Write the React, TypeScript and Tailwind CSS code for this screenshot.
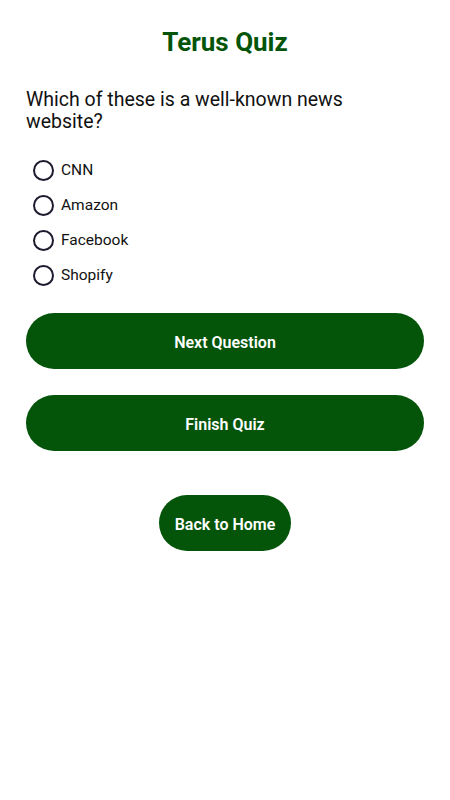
import React from "react";

const options = ["CNN", "Amazon", "Facebook", "Shopify"];

export default function App() {
  return (
    <div className="min-h-[800px] w-full bg-white px-[26px]" style={{ fontFamily: "Roboto, 'Noto Sans', sans-serif" }}>
      <h1 className="pt-[27px] text-center text-[26px] font-bold leading-[30px] text-[#04550a]">Terus Quiz</h1>
      <p className="mt-[32px] text-[19.5px] leading-[22px] text-[#111]">Which of these is a well-known news website?</p>
      <div className="mt-[20px] flex flex-col">
        {options.map((o) => (
          <label key={o} className="flex h-[35px] items-center">
            <span className="ml-[7px] box-border h-[21px] w-[21px] rounded-full border-2 border-[#1c1b2e]" />
            <span className="ml-[7px] text-[15.5px] text-[#111]">{o}</span>
          </label>
        ))}
      </div>
      <div className="mt-[20px] flex flex-col gap-[26px]">
        <button className="h-[56px] w-full rounded-full bg-[#04550a] pt-[3px] text-[16px] font-semibold text-white">Next Question</button>
        <button className="h-[56px] w-full rounded-full bg-[#04550a] pt-[3px] text-[16px] font-semibold text-white">Finish Quiz</button>
      </div>
      <div className="mt-[44px] flex justify-center">
        <button className="h-[56px] w-[132px] rounded-full bg-[#04550a] pt-[3px] text-[16px] font-semibold text-white">Back to Home</button>
      </div>
    </div>
  );
}
